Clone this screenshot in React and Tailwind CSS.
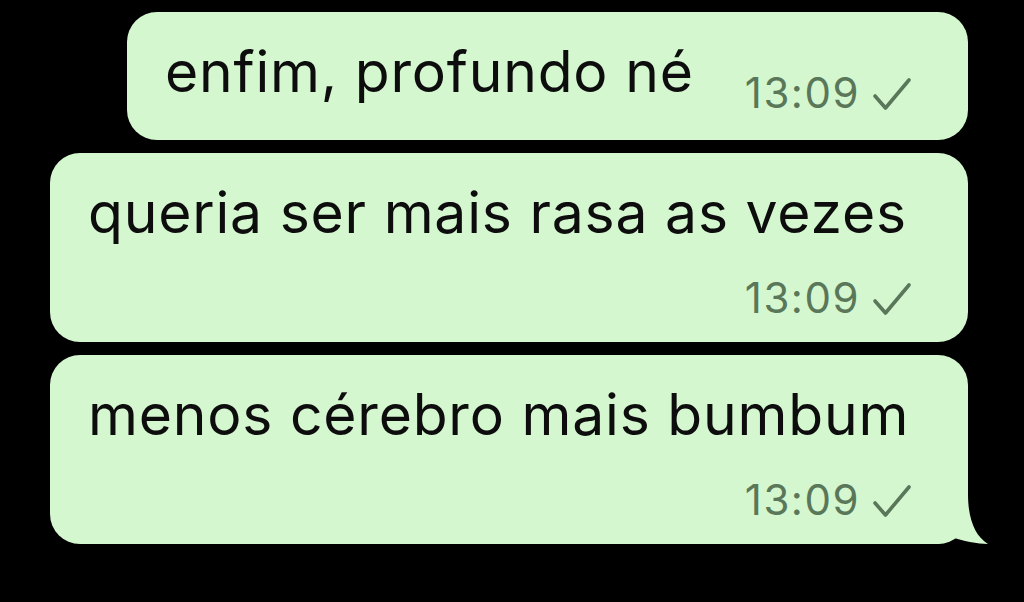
import React from 'react';

function Check() {
  return (
    <svg className="w-[40px] h-[34px] shrink-0" viewBox="0 0 40 34" fill="none">
      <path d="M3 19 L13.5 31 L37 3" stroke="#5a775a" strokeWidth="3.6" strokeLinecap="round" strokeLinejoin="round" />
    </svg>
  );
}

function Time() {
  return (
    <div className="flex items-end gap-[12px]">
      <span className="text-[42px] leading-[48px] text-[#5a775a] tracking-[1.5px]">13:09</span>
      <div className="mb-[6px]">
        <Check />
      </div>
    </div>
  );
}

function Bubble({ text, tail }) {
  return (
    <div className="relative w-[918px] bg-[#d4f7cf] rounded-[30px] pl-[38px] pr-[56px] pt-[26px] pb-[20px] flex flex-col">
      <span className="text-[57px] leading-[68px] text-[#0d0d0d] tracking-[0.8px]">{text}</span>
      <div className="flex justify-end mt-[27px]">
        <Time />
      </div>
      {tail && (
        <svg className="absolute right-[-20px] bottom-0 w-[50px] h-[50px]" viewBox="0 0 50 50">
          <path d="M30 0 C30 25 37 42 50 50 C40 50 24 47 14 43 C10 46 5 49 0 50 L0 0 Z" fill="#d4f7cf" />
        </svg>
      )}
    </div>
  );
}

export default function App() {
  return (
    <div className="w-[1024px] h-[602px] bg-black overflow-hidden flex flex-col items-end pr-[56px] pt-[12px] gap-[13px]" style={{ fontFamily: 'Inter, "Liberation Sans", sans-serif' }}>
      <div className="w-[841px] h-[128px] bg-[#d4f7cf] rounded-[30px] pl-[38px] pr-[56px] flex justify-between items-start">
        <span className="mt-[26px] text-[57px] leading-[68px] text-[#0d0d0d] tracking-[0.8px]">enfim, profundo né</span>
        <div className="mt-[57px]">
          <Time />
        </div>
      </div>
      <Bubble text="queria ser mais rasa as vezes" />
      <Bubble text="menos cérebro mais bumbum" tail />
    </div>
  );
}
